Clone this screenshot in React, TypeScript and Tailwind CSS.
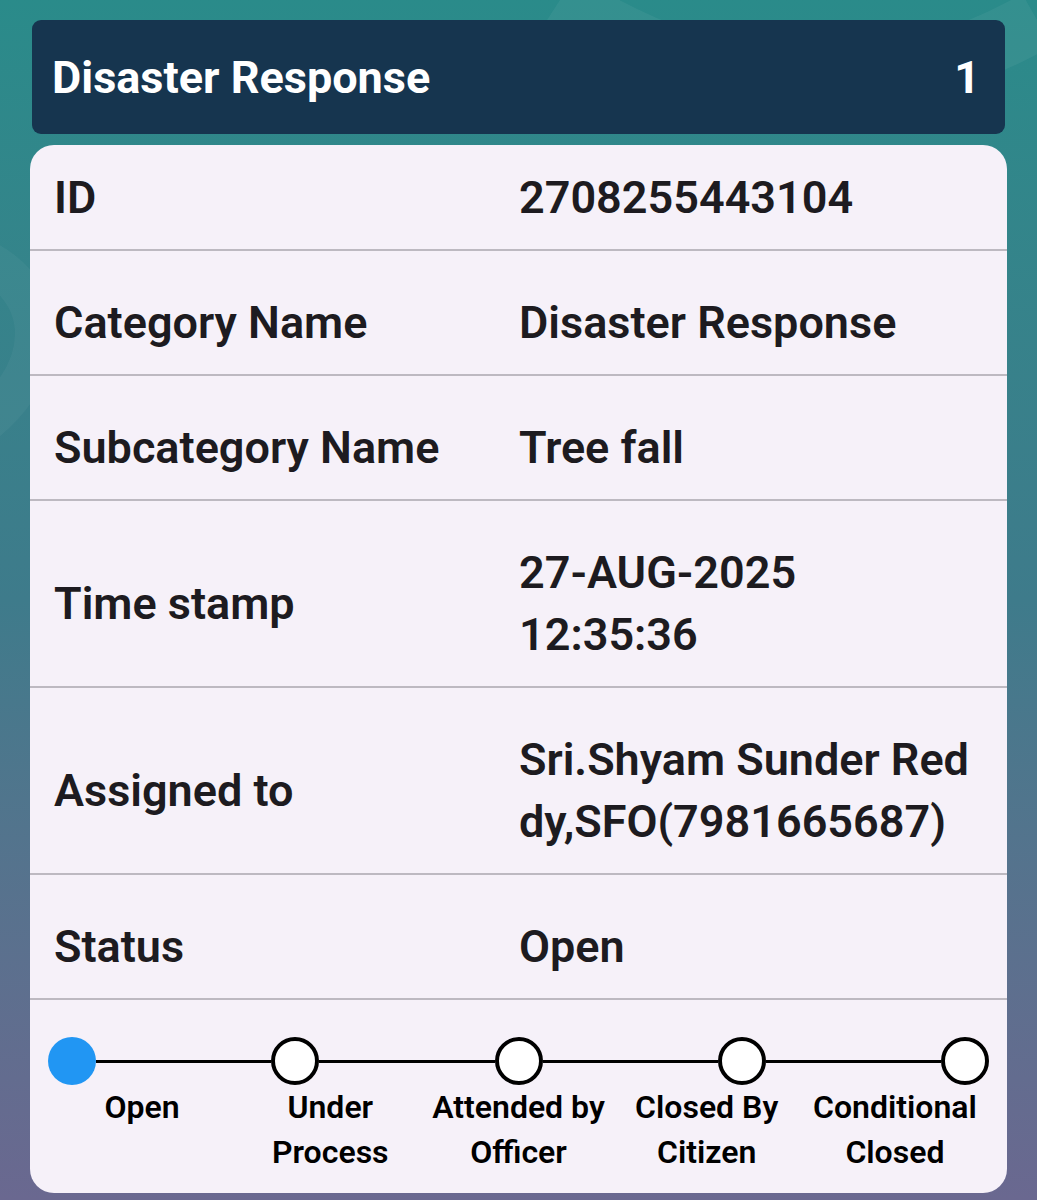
const rows: { label: string; value: string[]; first?: boolean }[] = [
  { label: 'ID', value: ['2708255443104'], first: true },
  { label: 'Category Name', value: ['Disaster Response'] },
  { label: 'Subcategory Name', value: ['Tree fall'] },
  { label: 'Time stamp', value: ['27-AUG-2025', '12:35:36'] },
  { label: 'Assigned to', value: ['Sri.Shyam Sunder Red', 'dy,SFO(7981665687)'] },
  { label: 'Status', value: ['Open'] },
];

const steps = [
  ['Open'],
  ['Under', 'Process'],
  ['Attended by', 'Officer'],
  ['Closed By', 'Citizen'],
  ['Conditional', 'Closed'],
];

const Stepper = ({ current }: { current: number }) => (
  <div className="ml-[18px] mr-[18px] pt-[37px] pb-[18px]">
    <div className="flex items-center">
      {steps.map((_, i) => (
        <div key={i} className={`flex items-center ${i === 0 ? '' : 'flex-1'}`}>
          {i > 0 && <div className="h-[3px] flex-1 bg-black" />}
          {i === current ? (
            <div className="w-[48px] h-[48px] rounded-full bg-[#2196f3]" />
          ) : (
            <div className="w-[48px] h-[48px] rounded-full border-[4px] border-black bg-white" />
          )}
        </div>
      ))}
    </div>
    <div className="grid grid-cols-5 text-center text-[32px] leading-[45px] font-semibold text-black">
      {steps.map((s, i) => (
        <div key={i} className="whitespace-nowrap">
          {s.map((line) => (
            <div key={line}>{line}</div>
          ))}
        </div>
      ))}
    </div>
  </div>
);

const App = () => {
  return (
    <div
      className="relative min-h-[1200px] w-full overflow-hidden bg-gradient-to-b from-[#2a8b8a] via-[#3e7b8b] to-[#6a6890]"
      style={{ fontFamily: 'Roboto, "Noto Sans", sans-serif' }}
    >
      <svg className="absolute inset-0 w-full h-full" viewBox="0 0 1037 1200">
        <path d="M560 0 C 700 90, 860 120, 1037 20" stroke="#ffffff" strokeOpacity="0.05" strokeWidth="60" fill="none" />
        <path d="M-40 250 C 60 280, 60 380, -40 440" stroke="#ffffff" strokeOpacity="0.04" strokeWidth="40" fill="none" />
      </svg>

      <div className="relative px-[30px] pt-[20px] flex flex-col gap-[11px]">
        <div className="mx-[2px] h-[114px] rounded-[9px] bg-[#16354f] flex items-center justify-between pl-[20px] pr-[25px] pt-[2px]">
          <span className="text-white text-[45px] font-bold">Disaster Response</span>
          <span className="text-white text-[45px] font-bold">1</span>
        </div>

        <div className="rounded-[24px] bg-[#f6f1f9] overflow-hidden">
          {rows.map((row) => (
            <div
              key={row.label}
              className={`flex border-b-2 border-[#bdb9c1] text-[45px] leading-[62px] font-semibold text-[#1d1b20] ${row.first ? 'pt-[22px] pb-[20px]' : 'pt-[41px] pb-[20px]'}`}
            >
              <div className="w-[489px] shrink-0 pl-[24px] flex items-center">{row.label}</div>
              <div className="flex-1 pr-[10px]">
                {row.value.map((v) => (
                  <div key={v} className="whitespace-nowrap">{v}</div>
                ))}
              </div>
            </div>
          ))}
          <Stepper current={0} />
        </div>
      </div>
    </div>
  );
};

export default App;
